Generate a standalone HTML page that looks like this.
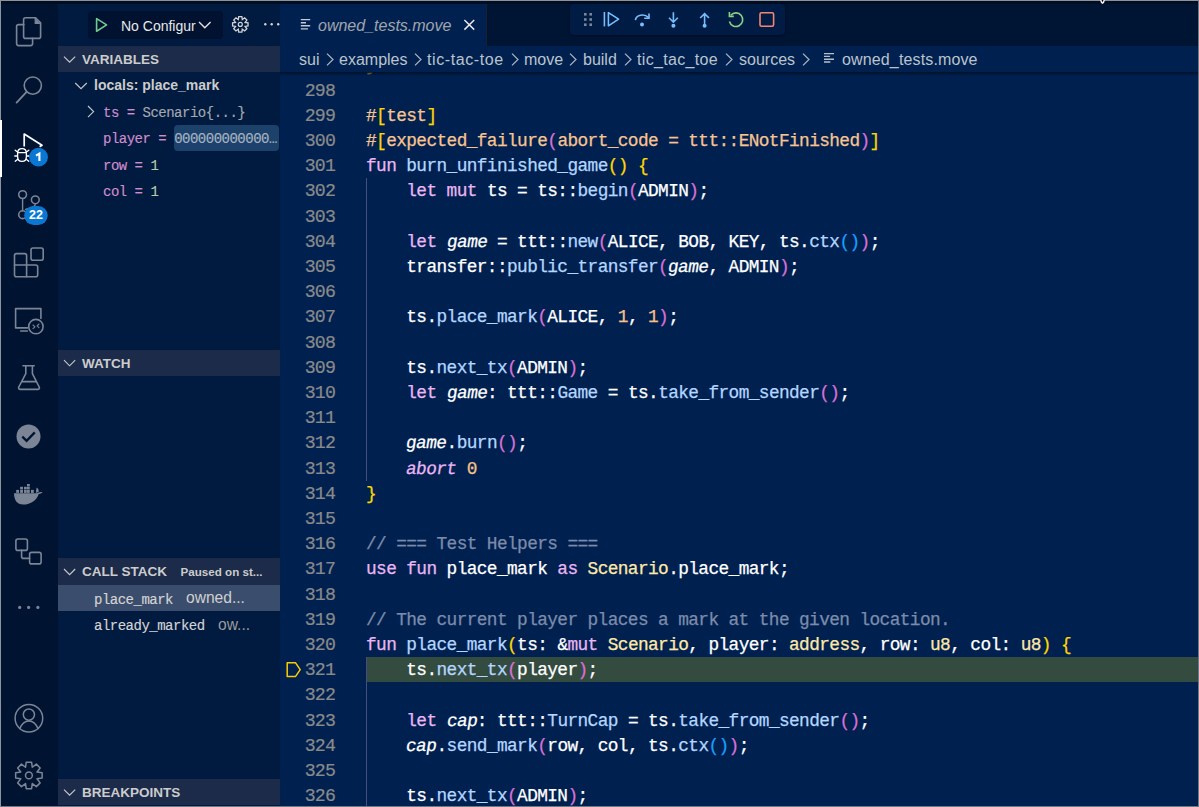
<!DOCTYPE html>
<html><head><meta charset="utf-8">
<style>
*{margin:0;padding:0;box-sizing:border-box}
html,body{width:1199px;height:807px;overflow:hidden;background:#001434}
body{position:relative;font-family:"Liberation Sans",sans-serif}
.a{position:absolute;white-space:pre}
#act{position:absolute;left:0;top:0;width:58px;height:807px;background:#001432}
#side{position:absolute;left:58px;top:4px;width:222px;height:803px;background:#001a40}
#editor{position:absolute;left:280px;top:72px;width:919px;height:735px;background:#002150;overflow:hidden}
#tabbar{position:absolute;left:280px;top:0;width:919px;height:46px;background:#001434}
#tab{position:absolute;left:280px;top:4px;width:207px;height:42px;background:#002150;border-right:1px solid #1c1f2c}
#crumbs{position:absolute;left:280px;top:46px;width:919px;height:26px;background:#002150}
#shadow{position:absolute;left:280px;top:72px;width:919px;height:4px;background:linear-gradient(#00102a,rgba(0,16,42,0))}
.ln{position:absolute;left:86px;height:25.2px;line-height:25.2px;font-family:"Liberation Mono",monospace;font-size:17.8px;letter-spacing:-0.6px;-webkit-text-stroke:0.25px;white-space:pre;color:#fff}
.num{position:absolute;left:15px;width:40px;text-align:right;height:25.2px;line-height:25.2px;font-family:"Liberation Mono",monospace;font-size:18.2px;letter-spacing:-0.8px;-webkit-text-stroke:0.2px;color:#8a8a8a}
.hdr{position:absolute;left:58px;width:222px;height:26.4px;background:#1b2b49}
.ht{position:absolute;left:24px;top:0.5px;line-height:26.4px;color:#cccccc;font-weight:bold;font-size:13.5px}
.crumb{position:absolute;top:47px;line-height:26px;font-size:16px;color:#bcc3cd;white-space:pre}
.mono{font-family:"Liberation Mono",monospace}
.vr{position:absolute;left:103px;line-height:26.4px;padding-top:1px;font-family:"Liberation Mono",monospace;font-size:14px;letter-spacing:-0.5px;-webkit-text-stroke:0.15px;white-space:pre;color:#cccccc}
#border{position:absolute;left:0;top:0;width:1199px;height:807px;border-top:1px solid #8c939c;border-left:1px solid #8c939c;border-right:1px solid #6f7784;border-bottom:1px solid #6f7784}
#band{position:absolute;left:1px;top:1px;width:1197px;height:3px;background:#000d22}
</style></head><body>
<div id="act"></div>
<div id="side"></div>
<div id="tabbar"></div>
<div id="tab"></div>
<div id="crumbs"></div>
<div id="band"></div>

<!-- debug toolbar -->
<div class="a" style="left:570px;top:4px;width:215px;height:31px;background:#001c44;border-radius:4px;box-shadow:0 1px 3px rgba(0,0,0,0.35)"></div>

<!-- tab text -->
<div class="a" style="left:318px;top:5.2px;line-height:42px;font-size:16px;font-style:italic;color:#a0a5ad">owned_tests.move</div>

<!-- breadcrumbs -->
<div class="crumb" style="left:299px">sui</div>
<div class="crumb" style="left:339px">examples</div>
<div class="crumb" style="left:427px;letter-spacing:0.6px">tic-tac-toe</div>
<div class="crumb" style="left:524px">move</div>
<div class="crumb" style="left:583px">build</div>
<div class="crumb" style="left:637px;letter-spacing:0.33px">tic_tac_toe</div>
<div class="crumb" style="left:739px">sources</div>
<div class="crumb" style="left:842px;letter-spacing:0.14px">owned_tests.move</div>

<!-- sidebar -->
<div class="a" style="left:88px;top:11px;width:135px;height:28px;background:#00122f;border-radius:4px"></div>
<div class="a" style="left:121px;top:12.3px;line-height:28px;font-size:14px;color:#e8e8e8;width:75px;overflow:hidden">No Configuration</div>

<div class="hdr" style="top:46px"><div class="ht">VARIABLES</div></div>
<div class="a" style="left:94px;top:72.4px;line-height:26.4px;font-size:14px;font-weight:bold;color:#cccccc">locals: place_mark</div>
<div class="vr" style="top:98.8px"><span style="color:#d08ccb">ts =</span> <span style="color:#a3a8b0">Scenario{...}</span></div>
<div class="a" style="left:174px;top:125.2px;width:105px;height:26px;background:#1c426c;border-radius:4px"></div>
<div class="vr" style="top:125.2px"><span style="color:#d08ccb">player =</span> <span style="color:#a6b2c2">000000000000…</span></div>
<div class="vr" style="top:151.6px"><span style="color:#d08ccb">row =</span> <span style="color:#b5cea8">1</span></div>
<div class="vr" style="top:178px"><span style="color:#d08ccb">col =</span> <span style="color:#b5cea8">1</span></div>

<div class="hdr" style="top:350px"><div class="ht">WATCH</div></div>

<div class="hdr" style="top:558.4px"><div class="ht">CALL STACK</div><div class="ht" style="left:122.6px;font-size:11.6px">Paused on st...</div></div>
<div class="a" style="left:58px;top:584.8px;width:222px;height:26.4px;background:#3a4d6d"></div>
<div class="vr" style="left:94px;top:585.8px;color:#d4d4d4">place_mark</div>
<div class="a" style="left:186px;top:585.4px;line-height:26.4px;font-size:15.6px;color:#d0d0d0">owned...</div>
<div class="vr" style="left:94px;top:612.2px;color:#d4d4d4">already_marked</div>
<div class="a" style="left:218px;top:611.8px;line-height:26.4px;font-size:15.6px;color:#9a9a9a">ow...</div>

<div class="hdr" style="top:779px"><div class="ht">BREAKPOINTS</div></div>

<!-- editor -->
<div id="editor">
<div class="a" style="left:86px;top:585px;width:833px;height:25.2px;background:#344c3f"></div>
<div class="a" style="left:86px;top:106.3px;width:1px;height:302.4px;background:#464f79"></div><div class="a" style="left:86px;top:585.1px;width:1px;height:151.2px;background:#464f79"></div><div class="ln" style="top:-18.7px"><span style="color:#ffd700">}</span></div>
<div class="ln" style="top:6.5px"></div>
<div class="num" style="top:6.5px">298</div>
<div class="ln" style="top:31.7px"><span style="color:#f8c490">#</span><span style="color:#ffd700">[</span><span style="color:#f8c490">test</span><span style="color:#ffd700">]</span></div>
<div class="num" style="top:31.7px">299</div>
<div class="ln" style="top:56.9px"><span style="color:#f8c490">#</span><span style="color:#ffd700">[</span><span style="color:#f8c490">expected_failure</span><span style="color:#da70d6">(</span><span style="color:#f8c490">abort_code = ttt::ENotFinished</span><span style="color:#da70d6">)</span><span style="color:#ffd700">]</span></div>
<div class="num" style="top:56.9px">300</div>
<div class="ln" style="top:82.1px"><span style="color:#eab6f3">fun </span><span style="color:#b4d6ff">burn_unfinished_game</span><span style="color:#ffd700">()</span><span style="color:#ffffff"> </span><span style="color:#ffd700">{</span></div>
<div class="num" style="top:82.1px">301</div>
<div class="ln" style="top:107.3px"><span style="color:#ffffff">    </span><span style="color:#eab6f3">let mut </span><span style="color:#ffffff">ts = ts::</span><span style="color:#b4d6ff">begin</span><span style="color:#da70d6">(</span><span style="color:#ffffff">ADMIN</span><span style="color:#da70d6">)</span><span style="color:#ffffff">;</span></div>
<div class="num" style="top:107.3px">302</div>
<div class="ln" style="top:132.5px"></div>
<div class="num" style="top:132.5px">303</div>
<div class="ln" style="top:157.7px"><span style="color:#ffffff">    </span><span style="color:#eab6f3">let </span><span style="color:#ffffff;display:inline-block;transform:skewX(-9deg)">game</span><span style="color:#ffffff"> = ttt::</span><span style="color:#b4d6ff">new</span><span style="color:#da70d6">(</span><span style="color:#ffffff">ALICE, BOB, KEY, ts.</span><span style="color:#b4d6ff">ctx</span><span style="color:#179fff">()</span><span style="color:#da70d6">)</span><span style="color:#ffffff">;</span></div>
<div class="num" style="top:157.7px">304</div>
<div class="ln" style="top:182.9px"><span style="color:#ffffff">    transfer::</span><span style="color:#b4d6ff">public_transfer</span><span style="color:#da70d6">(</span><span style="color:#ffffff;display:inline-block;transform:skewX(-9deg)">game</span><span style="color:#ffffff">, ADMIN</span><span style="color:#da70d6">)</span><span style="color:#ffffff">;</span></div>
<div class="num" style="top:182.9px">305</div>
<div class="ln" style="top:208.1px"></div>
<div class="num" style="top:208.1px">306</div>
<div class="ln" style="top:233.3px"><span style="color:#ffffff">    ts.</span><span style="color:#b4d6ff">place_mark</span><span style="color:#da70d6">(</span><span style="color:#ffffff">ALICE, </span><span style="color:#f9c089">1</span><span style="color:#ffffff">, </span><span style="color:#f9c089">1</span><span style="color:#da70d6">)</span><span style="color:#ffffff">;</span></div>
<div class="num" style="top:233.3px">307</div>
<div class="ln" style="top:258.5px"></div>
<div class="num" style="top:258.5px">308</div>
<div class="ln" style="top:283.7px"><span style="color:#ffffff">    ts.</span><span style="color:#b4d6ff">next_tx</span><span style="color:#da70d6">(</span><span style="color:#ffffff">ADMIN</span><span style="color:#da70d6">)</span><span style="color:#ffffff">;</span></div>
<div class="num" style="top:283.7px">309</div>
<div class="ln" style="top:308.9px"><span style="color:#ffffff">    </span><span style="color:#eab6f3">let </span><span style="color:#ffffff;display:inline-block;transform:skewX(-9deg)">game</span><span style="color:#ffffff">: ttt::</span><span style="color:#b4d6ff">Game</span><span style="color:#ffffff"> = ts.</span><span style="color:#b4d6ff">take_from_sender</span><span style="color:#da70d6">()</span><span style="color:#ffffff">;</span></div>
<div class="num" style="top:308.9px">310</div>
<div class="ln" style="top:334.1px"></div>
<div class="num" style="top:334.1px">311</div>
<div class="ln" style="top:359.3px"><span style="color:#ffffff">    </span><span style="color:#ffffff;display:inline-block;transform:skewX(-9deg)">game</span><span style="color:#ffffff">.</span><span style="color:#b4d6ff">burn</span><span style="color:#da70d6">()</span><span style="color:#ffffff">;</span></div>
<div class="num" style="top:359.3px">312</div>
<div class="ln" style="top:384.5px"><span style="color:#ffffff">    </span><span style="color:#eab6f3;display:inline-block;transform:skewX(-9deg)">abort</span><span style="color:#ffffff"> </span><span style="color:#f9c089">0</span></div>
<div class="num" style="top:384.5px">313</div>
<div class="ln" style="top:409.7px"><span style="color:#ffd700">}</span></div>
<div class="num" style="top:409.7px">314</div>
<div class="ln" style="top:434.9px"></div>
<div class="num" style="top:434.9px">315</div>
<div class="ln" style="top:460.1px"><span style="color:#7d8bab">// === Test Helpers ===</span></div>
<div class="num" style="top:460.1px">316</div>
<div class="ln" style="top:485.3px"><span style="color:#eab6f3">use fun </span><span style="color:#ffffff">place_mark </span><span style="color:#eab6f3">as </span><span style="color:#ffe9a8">Scenario</span><span style="color:#ffffff">.place_mark;</span></div>
<div class="num" style="top:485.3px">317</div>
<div class="ln" style="top:510.5px"></div>
<div class="num" style="top:510.5px">318</div>
<div class="ln" style="top:535.7px"><span style="color:#7d8bab">// The current player places a mark at the given location.</span></div>
<div class="num" style="top:535.7px">319</div>
<div class="ln" style="top:560.9px"><span style="color:#eab6f3">fun </span><span style="color:#b4d6ff">place_mark</span><span style="color:#ffd700">(</span><span style="color:#ffffff">ts: &amp;</span><span style="color:#eab6f3">mut </span><span style="color:#ffe9a8">Scenario</span><span style="color:#ffffff">, player: </span><span style="color:#ffe9a8">address</span><span style="color:#ffffff">, row: </span><span style="color:#ffe9a8">u8</span><span style="color:#ffffff">, col: </span><span style="color:#ffe9a8">u8</span><span style="color:#ffd700">)</span><span style="color:#ffffff"> </span><span style="color:#ffd700">{</span></div>
<div class="num" style="top:560.9px">320</div>
<div class="ln" style="top:586.1px"><span style="color:#ffffff">    ts.</span><span style="color:#b4d6ff">next_tx</span><span style="color:#da70d6">(</span><span style="color:#ffffff">player</span><span style="color:#da70d6">)</span><span style="color:#ffffff">;</span></div>
<div class="num" style="top:586.1px">321</div>
<div class="ln" style="top:611.3px"></div>
<div class="num" style="top:611.3px">322</div>
<div class="ln" style="top:636.5px"><span style="color:#ffffff">    </span><span style="color:#eab6f3">let </span><span style="color:#ffffff;display:inline-block;transform:skewX(-9deg)">cap</span><span style="color:#ffffff">: ttt::</span><span style="color:#b4d6ff">TurnCap</span><span style="color:#ffffff"> = ts.</span><span style="color:#b4d6ff">take_from_sender</span><span style="color:#da70d6">()</span><span style="color:#ffffff">;</span></div>
<div class="num" style="top:636.5px">323</div>
<div class="ln" style="top:661.7px"><span style="color:#ffffff">    </span><span style="color:#ffffff;display:inline-block;transform:skewX(-9deg)">cap</span><span style="color:#ffffff">.</span><span style="color:#b4d6ff">send_mark</span><span style="color:#da70d6">(</span><span style="color:#ffffff">row, col, ts.</span><span style="color:#b4d6ff">ctx</span><span style="color:#179fff">()</span><span style="color:#da70d6">)</span><span style="color:#ffffff">;</span></div>
<div class="num" style="top:661.7px">324</div>
<div class="ln" style="top:686.9px"></div>
<div class="num" style="top:686.9px">325</div>
<div class="ln" style="top:712.1px"><span style="color:#ffffff">    ts.</span><span style="color:#b4d6ff">next_tx</span><span style="color:#da70d6">(</span><span style="color:#ffffff">ADMIN</span><span style="color:#da70d6">)</span><span style="color:#ffffff">;</span></div>
<div class="num" style="top:712.1px">326</div>
</div>
<div id="shadow"></div>

<svg class="a" style="left:0;top:0" width="1199" height="807" viewBox="0 0 1199 807">
<g fill="none" stroke="#7b8595" stroke-width="1.6" stroke-linejoin="round" stroke-linecap="round">
  <!-- files -->
  <path d="M23.8 24.6 H18.6 a2 2 0 0 0 -2 2 V43.6 a2 2 0 0 0 2 2 H30.6 a2 2 0 0 0 2 -2 V38.4"/>
  <path d="M25.6 17.8 H35.6 L40.6 22.8 V36.4 a2 2 0 0 1 -2 2 H25.6 a2 2 0 0 1 -2 -2 V19.8 a2 2 0 0 1 2 -2 Z"/>
  <path d="M35.2 18 V23.4 H40.4" fill="#7b8595" stroke-width="1.2"/>
  <!-- search -->
  <circle cx="32.8" cy="85.6" r="8.6"/>
  <path d="M26.6 91.8 L16.6 102.6" stroke-width="1.8"/>
  <!-- source control -->
  <circle cx="22.6" cy="194.6" r="3.9" stroke-width="1.55"/>
  <circle cx="35.3" cy="199.8" r="3.9" stroke-width="1.55"/>
  <circle cx="22.6" cy="214.7" r="3.9" stroke-width="1.55"/>
  <path d="M22.6 198.5 V210.8" stroke-width="1.4"/>
  <path d="M35.3 203.7 C35.3 208 30 207.5 25.6 209.5" stroke-width="1.4"/>
  <!-- extensions -->
  <path d="M16.5 253.6 H24.6 a2 2 0 0 1 2 2 V265 H35.7 a2 2 0 0 1 2 2 V274.8 a2 2 0 0 1 -2 2 H16.5 a2 2 0 0 1 -2 -2 V255.6 a2 2 0 0 1 2 -2 Z"/>
  <path d="M14.5 265 H26.6 V276.8"/>
  <rect x="31" y="248" width="12.2" height="12.2" rx="2"/>
  <!-- remote explorer -->
  <path d="M27.5 327.9 H15.6 V308.6 H40.9 V318.4"/>
  <path d="M20.7 331 H27.3"/>
  <circle cx="35.9" cy="326.6" r="7.2"/>
  <path d="M33 325 L35 326.8 L33 328.6" stroke-width="1.1"/>
  <path d="M39 324 L37 325.8 L39 327.6" stroke-width="1.1"/>
  <!-- flask -->
  <path d="M23 365.8 H34.2"/>
  <path d="M25.8 366 V373.6 L18.8 387 a1.6 1.6 0 0 0 1.4 2.4 H37.8 a1.6 1.6 0 0 0 1.4 -2.4 L32.4 373.6 V366"/>
  <path d="M22.2 381.6 H35.8"/>
  <!-- diagram -->
  <rect x="15.9" y="539" width="11.5" height="11.4" rx="2"/>
  <rect x="29.6" y="552.4" width="11.5" height="11.5" rx="2"/>
  <path d="M21.6 550.4 V556.4 a2 2 0 0 0 2 2 H29.6"/>
  <!-- account -->
  <circle cx="28.9" cy="718.3" r="13.8" stroke-width="1.5"/>
  <circle cx="28.9" cy="714.6" r="5.6" stroke-width="1.5"/>
  <path d="M19.8 728.6 C22 723.4 25 721 28.9 721 C32.8 721 35.8 723.4 38 728.6" stroke-width="1.5"/>
  <!-- gear -->
  <circle cx="28.9" cy="775.4" r="3.4" stroke-width="1.5"/>
  <path stroke-width="1.5" d="M26.22 762.17 L31.58 762.17 L32.27 767.27 L36.36 764.15 L40.15 767.94 L37.03 772.03 L42.13 772.72 L42.13 778.08 L37.03 778.77 L40.15 782.86 L36.36 786.65 L32.27 783.53 L31.58 788.63 L26.22 788.63 L25.53 783.53 L21.44 786.65 L17.65 782.86 L20.77 778.77 L15.67 778.08 L15.67 772.72 L20.77 772.03 L17.65 767.94 L21.44 764.15 L25.53 767.27 Z"/>
</g>
<!-- debug (active) -->
<g fill="none" stroke="#ffffff" stroke-width="1.7" stroke-linejoin="round">
  <path d="M24.2 146.4 V134 L42 145.3 L39.6 146.8"/>
</g>
<g fill="none" stroke="#ffffff" stroke-width="1.35" stroke-linecap="round">
  <path d="M17.6 153.2 C17.6 150.2 19.6 148.6 22 148.6 C24.4 148.6 26.4 150.2 26.4 153.2 V156.4 C26.4 159.6 24.4 161.4 22 161.4 C19.6 161.4 17.6 159.6 17.6 156.4 Z"/>
  <path d="M17.8 152.6 H26.2"/>
  <path d="M15.2 150.2 L17.6 152 M28.8 150.2 L26.4 152 M14.8 156 H17.4 M29.2 156 H26.6 M15.2 161.2 L17.8 159.2 M28.8 161.2 L26.2 159.2"/>
</g>
<circle cx="38.5" cy="157.2" r="9.4" fill="#0a78d2"/>

<rect x="24.2" y="206" width="23.5" height="18.9" rx="9.45" fill="#0a78d2"/>

<!-- check circle -->
<circle cx="28.5" cy="436.5" r="12" fill="#7b8595"/>
<path d="M22.3 436.6 L26.6 440.8 L34.8 432.4" fill="none" stroke="#001432" stroke-width="2.3"/>
<!-- docker -->
<g fill="#7b8595">
  <path d="M14 493.3 H36.5 C37.5 493.3 38 493 38.5 492.6 C39.5 492 41 491.8 42.6 492 C41.8 493.2 40.4 493.8 38.6 494.2 C37 499.8 31 504.6 23 504.6 C17 504.6 14 500 14 493.3 Z"/>
  <path d="M36.3 493.2 C35.8 491 36.2 489 36.8 487.6 C38 488.6 38.8 490 38.8 491.6 Z"/>
  <rect x="16.2" y="489.9" width="2.8" height="3"/>
  <rect x="20.1" y="489.9" width="2.9" height="3"/>
  <rect x="24" y="489.9" width="2.8" height="3"/>
  <rect x="27" y="489.9" width="2.8" height="3"/>
  <rect x="31" y="489.9" width="2.8" height="3"/>
  <rect x="20.1" y="486.8" width="2.9" height="2.6"/>
  <rect x="24" y="486.8" width="2.8" height="2.6"/>
  <rect x="27" y="486.8" width="2.8" height="2.6"/>
  <rect x="27" y="484" width="2.8" height="2.4"/>
</g>
<!-- more dots -->
<g fill="#7b8595"><circle cx="19.7" cy="607.4" r="1.6"/><circle cx="28.6" cy="607.4" r="1.6"/><circle cx="37.9" cy="607.4" r="1.6"/></g>

<!-- sidebar title -->
<path d="M96.6 18.6 V31.2 L106.6 24.9 Z" fill="none" stroke="#73c991" stroke-width="1.6" stroke-linejoin="round"/>
<path d="M199 22 L204.8 27.8 L210.6 22" fill="none" stroke="#e0e0e0" stroke-width="1.4"/>
<path fill="none" stroke="#d4d4d4" stroke-width="1.3" d="M238.73 16.66 L241.87 16.66 L242.29 19.60 L244.66 17.82 L246.88 20.04 L245.10 22.41 L248.04 22.83 L248.04 25.97 L245.10 26.39 L246.88 28.76 L244.66 30.98 L242.29 29.20 L241.87 32.14 L238.73 32.14 L238.31 29.20 L235.94 30.98 L233.72 28.76 L235.50 26.39 L232.56 25.97 L232.56 22.83 L235.50 22.41 L233.72 20.04 L235.94 17.82 L238.31 19.60 Z"/>
<circle cx="240.3" cy="24.4" r="2" fill="none" stroke="#d4d4d4" stroke-width="1.2"/>
<g fill="#d4d4d4"><circle cx="265.3" cy="24.3" r="1.2"/><circle cx="271.7" cy="24.3" r="1.2"/><circle cx="278.2" cy="24.3" r="1.2"/></g>
<!-- section chevrons -->
<g fill="none" stroke="#c8c8c8" stroke-width="1.15">
  <path d="M64 56.6 L69.6 62.2 L75.2 56.6"/>
  <path d="M64 360.2 L69.6 365.8 L75.2 360.2"/>
  <path d="M64 569 L69.6 574.6 L75.2 569"/>
  <path d="M64 789.6 L69.6 795.2 L75.2 789.6"/>
  <path d="M75.2 83 L81 88.6 L86.8 83"/>
  <path d="M88 106 L93.6 111.6 L88 117.2"/>
</g>

<!-- tab icon + close -->
<g fill="none" stroke="#c4cad4" stroke-width="1.4">
  <path d="M300.8 19.6 H310.2 M300.8 22.8 H306 M300.8 25.8 H310.2 M300.8 28.9 H308"/>
  <path d="M824 53.6 H834 M824 56.4 H830 M824 59.2 H834 M824 62 H830.4" stroke="#b8bfca"/>
</g>
<path d="M464.4 20 L474.2 29.6 M474.2 20 L464.4 29.6" stroke="#e8e8e8" stroke-width="1.5" fill="none"/>
<!-- breadcrumb separators -->
<g fill="none" stroke="#aeb5c0" stroke-width="1.2">
  <path d="M327 53.6 L333 59.5 L327 65.4"/>
  <path d="M415 53.6 L421 59.5 L415 65.4"/>
  <path d="M512 53.6 L518 59.5 L512 65.4"/>
  <path d="M570 53.6 L576 59.5 L570 65.4"/>
  <path d="M625 53.6 L631 59.5 L625 65.4"/>
  <path d="M726 53.6 L732 59.5 L726 65.4"/>
  <path d="M803 53.6 L809 59.5 L803 65.4"/>
</g>

<!-- debug toolbar icons -->
<g fill="#7b8595"><rect x="584" y="13" width="2.6" height="2.6"/><rect x="589.4" y="13" width="2.6" height="2.6"/><rect x="584" y="18.2" width="2.6" height="2.6"/><rect x="589.4" y="18.2" width="2.6" height="2.6"/><rect x="584" y="23.4" width="2.6" height="2.6"/><rect x="589.4" y="23.4" width="2.6" height="2.6"/></g>
<g fill="none" stroke="#75beff" stroke-width="1.6">
  <path d="M604.4 12 V26.4"/>
  <path d="M608.4 12.6 V25.8 L618.6 19.2 Z" stroke-linejoin="round"/>
  <path d="M635.4 20.2 C636 15 644 13 648.6 17.6"/>
  <path d="M649 13.4 V18.2 H644.2"/>
  <path d="M673.4 12.2 V22.2 M669 17.8 L673.4 22.2 L677.8 17.8"/>
  <path d="M704.6 24 V13.6 M700.2 18 L704.6 13.6 L709 18"/>
</g>
<g fill="#75beff"><circle cx="642" cy="24.6" r="2"/><circle cx="673.4" cy="25.8" r="2"/><circle cx="704.6" cy="25.8" r="2"/></g>
<g fill="none" stroke="#89d185" stroke-width="1.6">
  <path d="M730.8 15.2 A6.8 6.8 0 1 1 729.4 21.6"/>
  <path d="M729.4 12 V16.4 H733.8"/>
</g>
<rect x="760" y="12.8" width="13.6" height="13.4" rx="1.5" fill="none" stroke="#f48771" stroke-width="1.6"/>

<!-- breakpoint marker -->
<path d="M287.2 662.8 H295.6 L300.2 669.6 L295.6 676.4 H287.2 Z" fill="none" stroke="#ffcc00" stroke-width="1.5" stroke-linejoin="round"/>
</svg>


<div id="border"></div>
<svg class="a" style="left:0;top:0" width="60" height="170"><path d="M36 155.6 L39.4 153.6 V161" fill="none" stroke="#fff" stroke-width="2.1"/></svg>
<div class="a" style="left:24.2px;top:206px;width:23.5px;height:19px;line-height:19px;text-align:center;font-size:12.5px;font-weight:bold;color:#fff">22</div>
<svg class="a" style="left:1098px;top:0" width="10" height="5"><path d="M2 0 L3 3 L4.5 4 L6 3 L7 0 Z" fill="#f0f0f0"/><path d="M3.5 0 L4.5 2.2 L5.5 0 Z" fill="#000"/></svg>
<div class="a" style="left:0;top:119.5px;width:2.2px;height:57.5px;background:#ffffff"></div>
</body></html>
